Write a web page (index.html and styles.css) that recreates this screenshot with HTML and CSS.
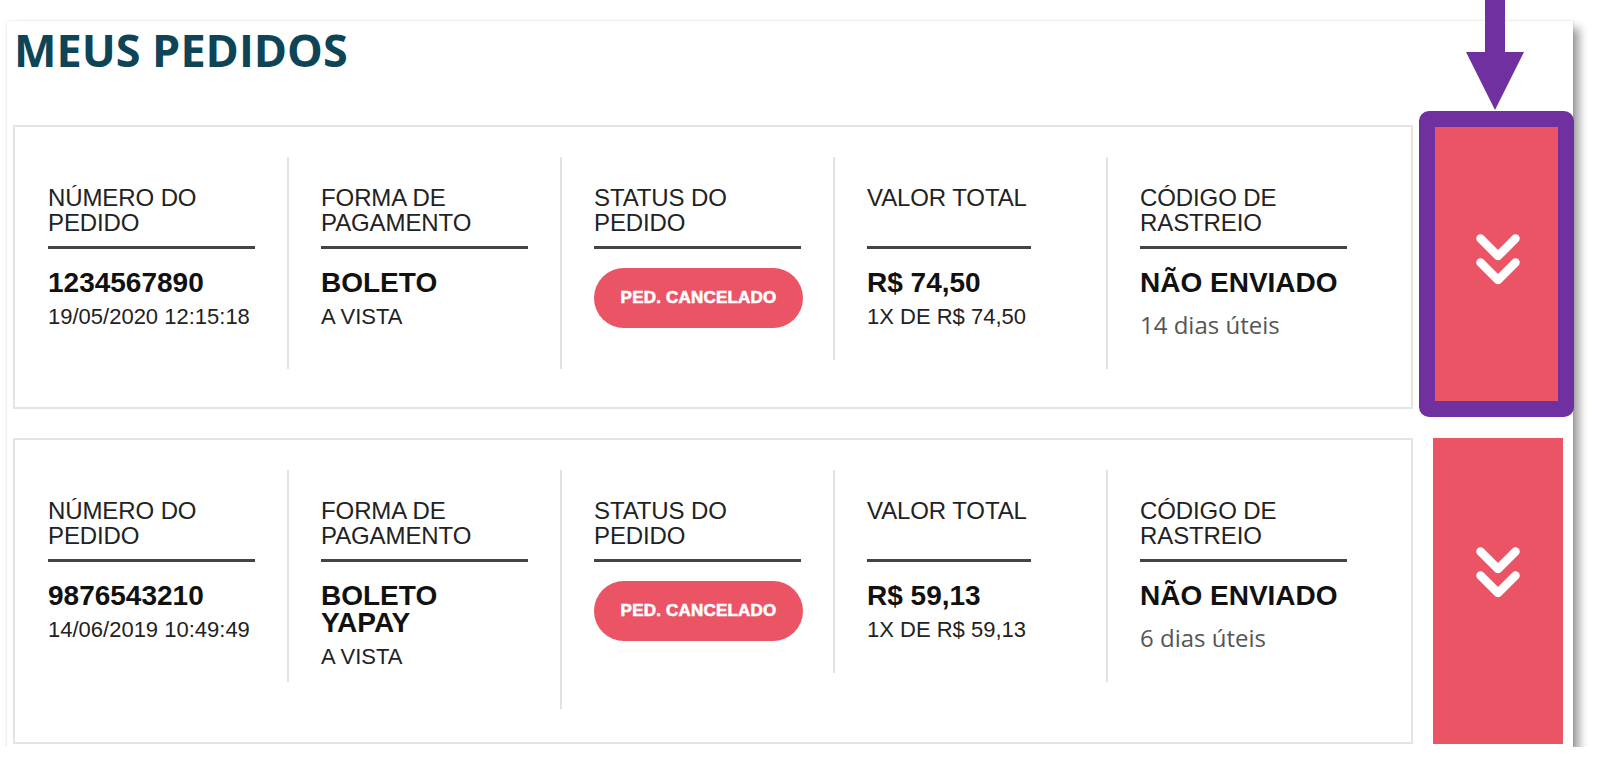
FILE: index.html
```html
<!DOCTYPE html>
<html lang="pt-BR">
<head>
    <meta charset="UTF-8">
    <meta name="viewport" content="width=device-width, initial-scale=1.0">
    <title>Meus Pedidos</title>
    <link rel="stylesheet" href="styles.css">
</head>
<body>
    <div class="panel">
        <h1 class="page-title">MEUS PEDIDOS</h1>

        <div class="order">
            <div class="order-card">
                <div class="col">
                    <div class="col-inner">
                        <div class="col-label">NÚMERO DO<br>PEDIDO</div>
                        <div class="col-value">1234567890</div>
                        <div class="col-sub">19/05/2020 12:15:18</div>
                    </div>
                </div>
                <div class="col">
                    <div class="col-inner">
                        <div class="col-label">FORMA DE<br>PAGAMENTO</div>
                        <div class="col-value">BOLETO</div>
                        <div class="col-sub">A VISTA</div>
                    </div>
                </div>
                <div class="col">
                    <div class="col-inner">
                        <div class="col-label">STATUS DO<br>PEDIDO</div>
                        <div class="status-pill">PED. CANCELADO</div>
                    </div>
                </div>
                <div class="col">
                    <div class="col-inner col-inner-narrow">
                        <div class="col-label">VALOR TOTAL</div>
                        <div class="col-value">R$ 74,50</div>
                        <div class="col-sub">1X DE R$ 74,50</div>
                    </div>
                </div>
                <div class="col col-last">
                    <div class="col-inner">
                        <div class="col-label">CÓDIGO DE<br>RASTREIO</div>
                        <div class="col-value">NÃO ENVIADO</div>
                        <div class="col-note">14 dias úteis</div>
                    </div>
                </div>
            </div>
            <button class="order-toggle" type="button" aria-label="Ver detalhes">
                <svg class="chevrons" width="44" height="52" viewBox="0 0 44 52">
                    <polyline points="4.5,4.5 22,22 39.5,4.5" />
                    <polyline points="4.5,28.5 22,46 39.5,28.5" />
                </svg>
            </button>
        </div>

        <div class="order">
            <div class="order-card">
                <div class="col">
                    <div class="col-inner">
                        <div class="col-label">NÚMERO DO<br>PEDIDO</div>
                        <div class="col-value">9876543210</div>
                        <div class="col-sub">14/06/2019 10:49:49</div>
                    </div>
                </div>
                <div class="col">
                    <div class="col-inner">
                        <div class="col-label">FORMA DE<br>PAGAMENTO</div>
                        <div class="col-value">BOLETO</div>
                        <div class="col-value col-value-next">YAPAY</div>
                        <div class="col-sub">A VISTA</div>
                    </div>
                </div>
                <div class="col">
                    <div class="col-inner">
                        <div class="col-label">STATUS DO<br>PEDIDO</div>
                        <div class="status-pill">PED. CANCELADO</div>
                    </div>
                </div>
                <div class="col">
                    <div class="col-inner col-inner-narrow">
                        <div class="col-label">VALOR TOTAL</div>
                        <div class="col-value">R$ 59,13</div>
                        <div class="col-sub">1X DE R$ 59,13</div>
                    </div>
                </div>
                <div class="col col-last">
                    <div class="col-inner">
                        <div class="col-label">CÓDIGO DE<br>RASTREIO</div>
                        <div class="col-value">NÃO ENVIADO</div>
                        <div class="col-note">6 dias úteis</div>
                    </div>
                </div>
            </div>
            <button class="order-toggle" type="button" aria-label="Ver detalhes">
                <svg class="chevrons" width="44" height="52" viewBox="0 0 44 52">
                    <polyline points="4.5,4.5 22,22 39.5,4.5" />
                    <polyline points="4.5,28.5 22,46 39.5,28.5" />
                </svg>
            </button>
        </div>
    </div>

    <!-- anotação: seta e destaque do botão -->
    <svg class="callout-arrow" width="58" height="110" viewBox="0 0 58 110">
        <path d="M19 0 H39 V52 H58 L29 110 L0 52 H19 Z" />
    </svg>
    <div class="callout-box"></div>
</body>
</html>
```

FILE: styles.css
```css
body {
    margin: 0;
    background-color: #fff;
    font-family: 'Liberation Sans', Arial, sans-serif;
    color: #222;
}
.panel {
    position: relative;
    box-sizing: border-box;
    width: 1566px;
    height: 726px;
    margin: 21px 0 0 7px;
    padding: 0 0 0 6px;
    background: #fff;
    box-shadow: 0 0 2px rgba(0, 0, 0, 0.12), 6px 7px 9px rgba(0, 0, 0, 0.4);
}
.page-title {
    margin: 0 0 48px 0;
    padding: 2px 0 0 1px;
    font-family: 'Open Sans', 'Noto Sans', sans-serif;
    font-weight: 700;
    font-size: 45px;
    line-height: 54px;
    color: #0d4557;
}
.order {
    display: flex;
    align-items: stretch;
    margin-bottom: 29px;
}
.order-card {
    box-sizing: border-box;
    display: flex;
    align-items: flex-start;
    width: 1400px;
    padding: 30px 0 33px 1px;
    border: 2px solid #e4e4e4;
}
.col {
    box-sizing: border-box;
    width: 273px;
    padding: 28px 0 32px 32px;
    border-right: 2px solid #e2e2e2;
}
.col-last {
    border-right: none;
}
.col-inner {
    width: 207px;
}
.col-inner-narrow {
    width: 164px;
}
.col-label {
    height: 50px;
    padding-bottom: 11px;
    border-bottom: 3px solid #444;
    font-size: 24px;
    line-height: 25px;
    color: #222;
    letter-spacing: -0.1px;
}
.col-value {
    margin-top: 20px;
    font-size: 28px;
    line-height: 27px;
    font-weight: bold;
    color: #111;
}
.col-value-next {
    margin-top: 0;
}
.col-sub {
    margin: 8px 0 7px;
    font-size: 22px;
    line-height: 26px;
    color: #222;
}
.col-note {
    margin: 17px 0 5px;
    font-family: 'Open Sans', 'Noto Sans', sans-serif;
    font-size: 24px;
    line-height: 24px;
    color: #555;
}
.status-pill {
    margin-top: 19px;
    height: 60px;
    width: 209px;
    border-radius: 30px;
    background-color: #eb5465;
    color: #fff;
    font-size: 17px;
    font-weight: 900;
    line-height: 60px;
    text-align: center;
    letter-spacing: 0.2px;
    -webkit-text-stroke: 0.6px #fff;
}
.order-toggle {
    display: flex;
    justify-content: center;
    align-items: flex-start;
    width: 130px;
    margin-left: 20px;
    padding: 109px 0 0;
    border: none;
    background-color: #eb5465;
    cursor: pointer;
}
.chevrons polyline {
    fill: none;
    stroke: #fff;
    stroke-width: 8.5;
    stroke-linecap: round;
    stroke-linejoin: round;
}
.callout-arrow {
    position: absolute;
    left: 1466px;
    top: 0;
}
.callout-arrow path {
    fill: #7030a0;
}
.callout-box {
    position: absolute;
    left: 1419px;
    top: 111px;
    box-sizing: border-box;
    width: 155px;
    height: 306px;
    border: 16px solid #7030a0;
    border-radius: 10px;
}
```
